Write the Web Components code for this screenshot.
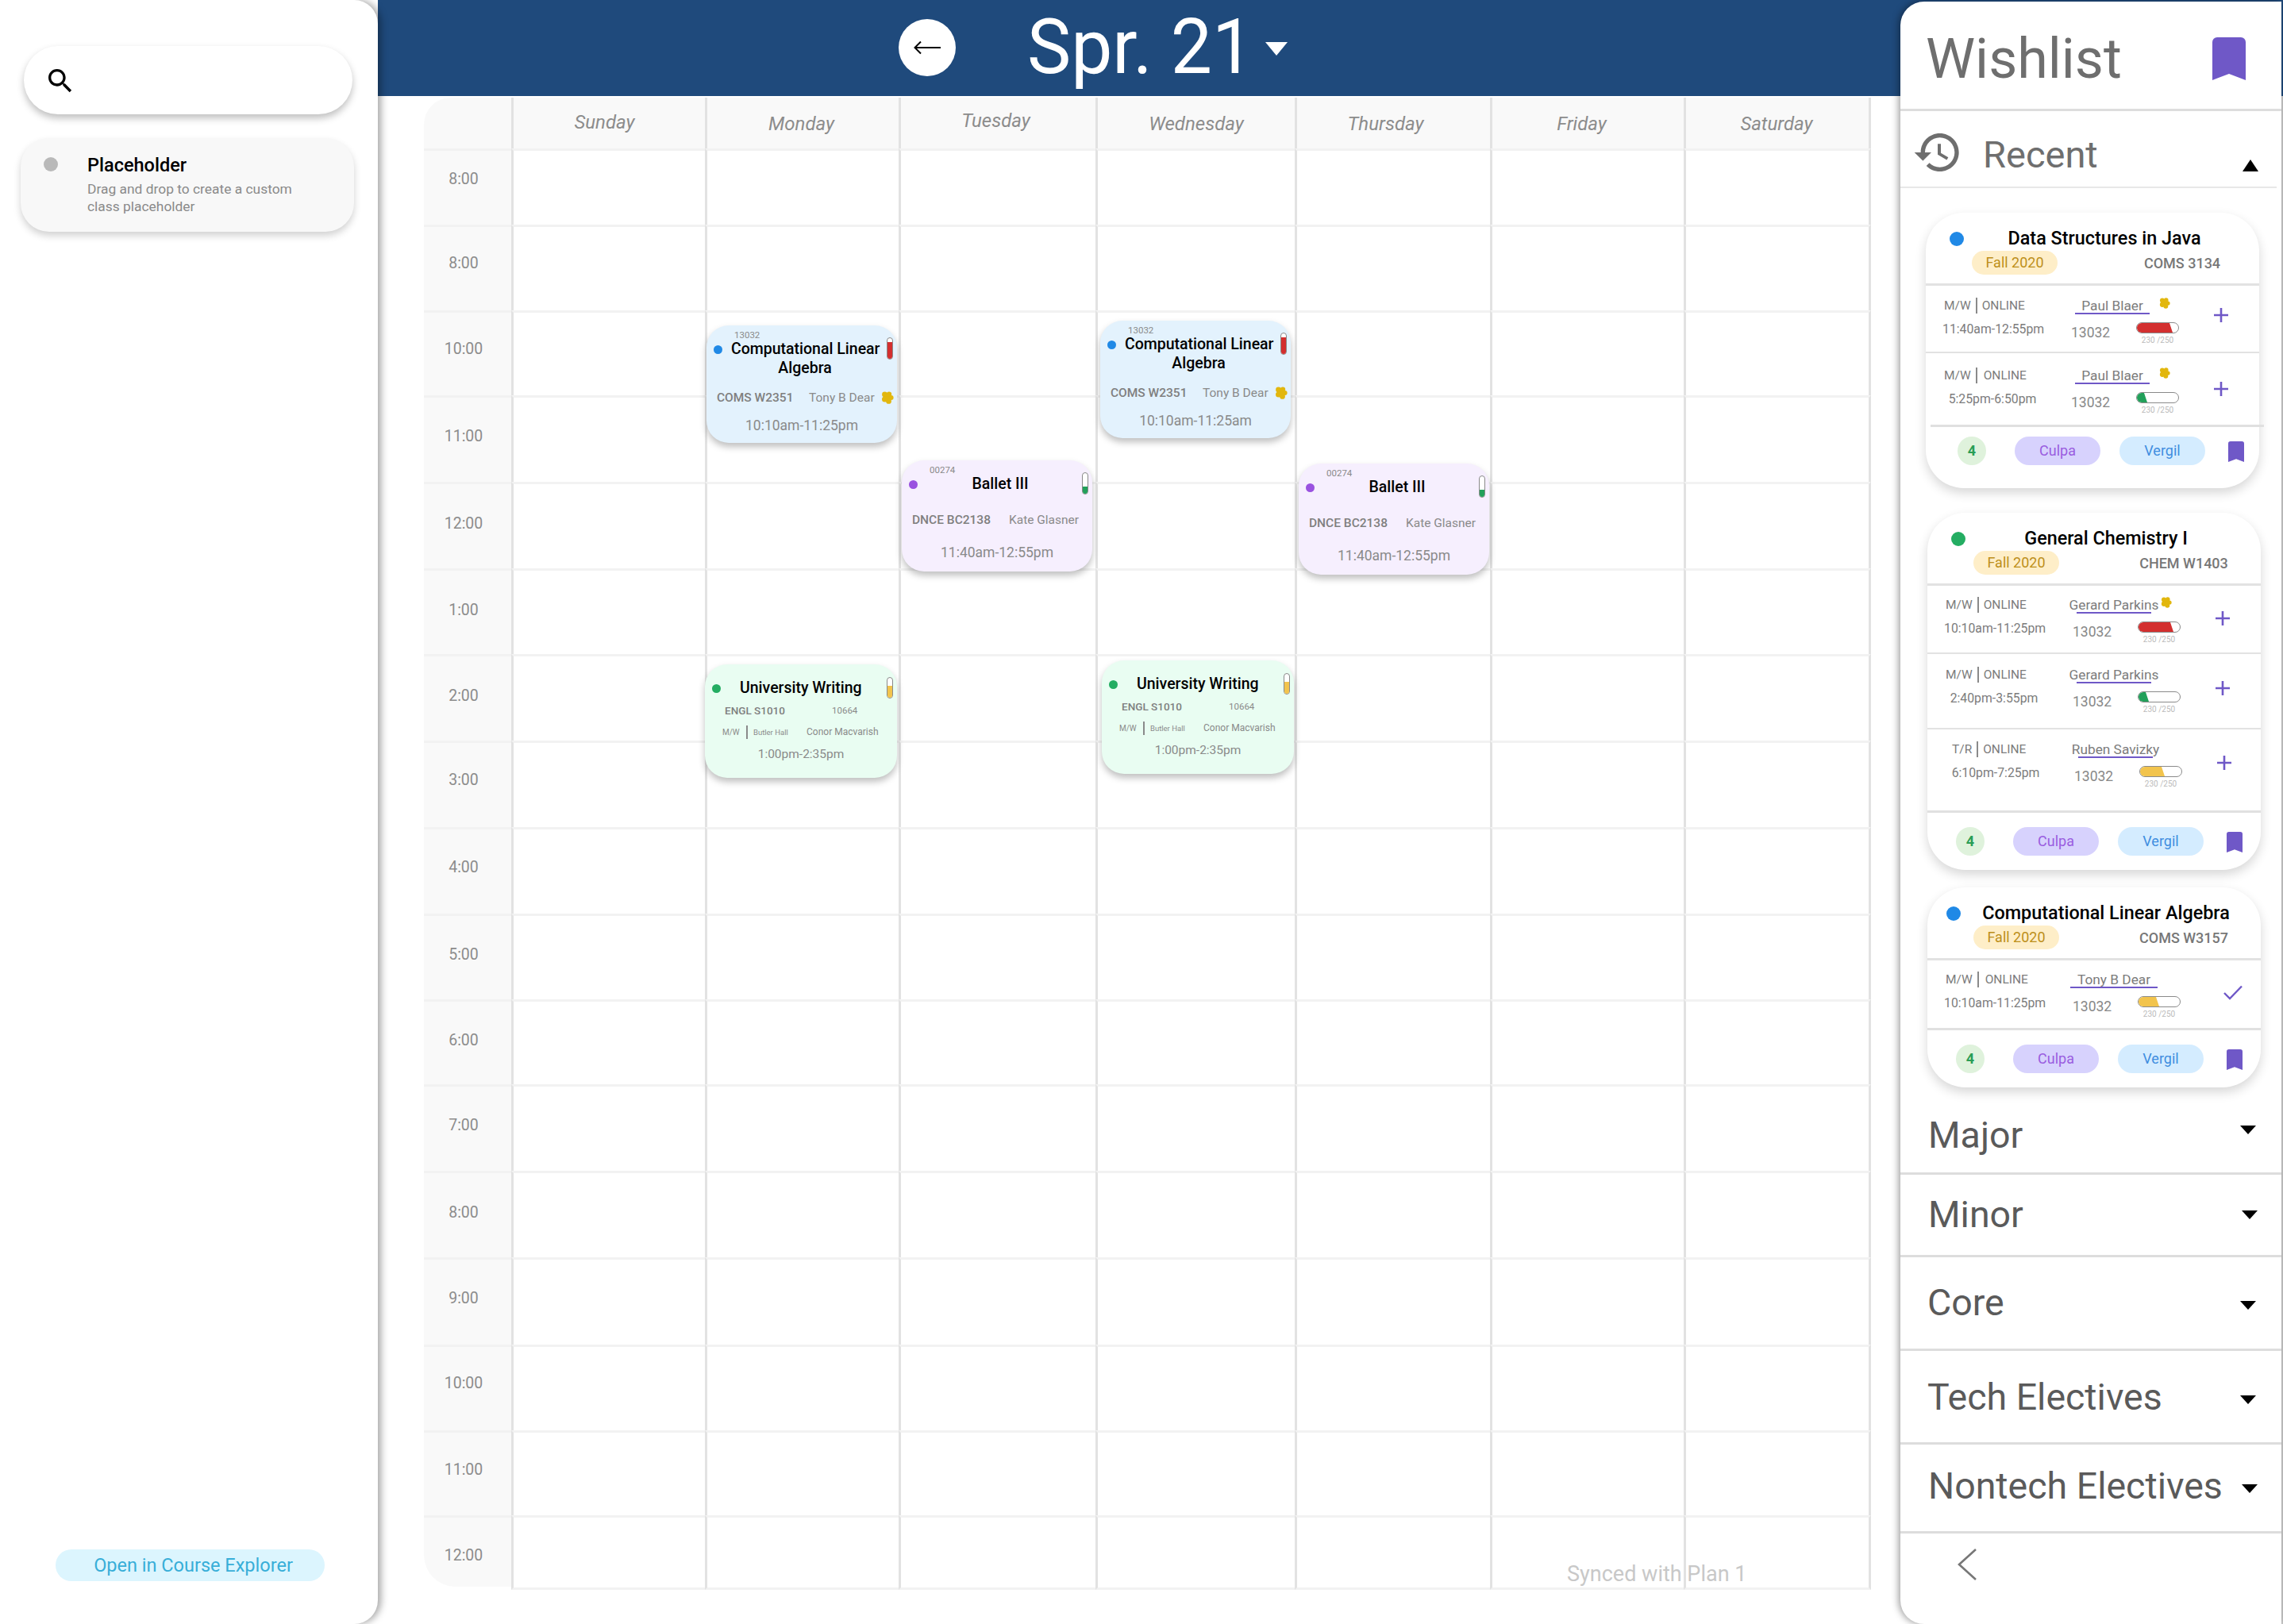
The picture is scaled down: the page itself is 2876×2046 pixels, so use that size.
<!DOCTYPE html>
<html lang="en">
<head>
<meta charset="utf-8">
<title>Schedule</title>
<style>
  html, body { margin: 0; height: 100%; background: #fff; font-family: Roboto, "Liberation Sans", sans-serif; }
</style>
</head>
<body>
<app-shell>
  <side-panel slot="side"></side-panel>
  <top-bar slot="top" label="Spr. 21"></top-bar>
  <cal-grid slot="main">
    <cal-event tone="blue" level="red" crn="13032" code="COMS W2351" prof="Tony B Dear" time="10:10am-11:25pm" culpa style="--x:356px;--y:287px">Computational Linear<br>Algebra</cal-event>
    <cal-event tone="blue" level="red" crn="13032" code="COMS W2351" prof="Tony B Dear" time="10:10am-11:25am" culpa style="--x:852px;--y:281px">Computational Linear<br>Algebra</cal-event>
    <cal-event tone="purple" level="green" crn="00274" code="DNCE BC2138" prof="Kate Glasner" time="11:40am-12:55pm" style="--x:602px;--y:457px">Ballet III</cal-event>
    <cal-event tone="purple" level="green" crn="00274" code="DNCE BC2138" prof="Kate Glasner" time="11:40am-12:55pm" style="--x:1102px;--y:461px">Ballet III</cal-event>
    <cal-event tone="mint" level="yellow" room="Butler Hall" day="M/W" crn="10664" code="ENGL S1010" prof="Conor Macvarish" time="1:00pm-2:35pm" style="--x:354px;--y:714px">University Writing</cal-event>
    <cal-event tone="mint" level="yellow" room="Butler Hall" day="M/W" crn="10664" code="ENGL S1010" prof="Conor Macvarish" time="1:00pm-2:35pm" style="--x:854px;--y:709px">University Writing</cal-event>
  </cal-grid>
  <wish-panel slot="wish">
    <wish-card label="Data Structures in Java" code="COMS 3134" tone="#2089e6" style="--mx:32px;--mt:31px;--foot-top:15px;--foot-x:4px;--foot-h:80px;--foot-shift:6px;--dot-x:30px">
      <wish-row day="M/W" where="ONLINE" time="11:40am-12:55pm" prof="Paul Blaer" level="red" fill="45" culpa style="--h:86px;--b:3px;--top:1px;--plus:-5px"></wish-row>
      <wish-row day="M/W" where="ONLINE" time="5:25pm-6:50pm" prof="Paul Blaer" level="green" fill="13" culpa style="--h:92px;--top:3px;--gap:8px"></wish-row>
    </wish-card>
    <wish-card label="General Chemistry I" code="CHEM W1403" tone="#24ad62" style="--mx:34px;--mt:31px;--dot-x:30px">
      <wish-row day="M/W" where="ONLINE" time="10:10am-11:25pm" prof="Gerard Parkins" level="red" fill="44" culpa style="--h:87px;--b:3px"></wish-row>
      <wish-row day="M/W" where="ONLINE" time="2:40pm-3:55pm" prof="Gerard Parkins" level="green" fill="13" style="--h:95px;--top:1px"></wish-row>
      <wish-row day="T/R" where="ONLINE" time="6:10pm-7:25pm" prof="Ruben Savizky" level="yellow" fill="31" style="--h:104px;--x:2px;--dp:8px"></wish-row>
    </wish-card>
    <wish-card label="Computational Linear Algebra" code="COMS W3157" tone="#2089e6" style="--mx:34px;--mt:22px;--dot-x:24px">
      <wish-row day="M/W" where="ONLINE" time="10:10am-11:25pm" prof="Tony B Dear" level="yellow" fill="26" check style="--h:88px;--b:3px;--ul-x:-8px;--ul:110px;--gap:8px"></wish-row>
    </wish-card>
    <wish-section label="Major" style="--h:110px;--pt:33px;--tri:48px;--lx:35px;--rx:32px"></wish-section>
    <wish-section label="Minor" style="--h:104px;--pt:23px;--tri:45px;--lx:35px;--rx:30px"></wish-section>
    <wish-section label="Core" style="--h:118px;--pt:30px;--tri:55px;--lx:34px;--rx:32px"></wish-section>
    <wish-section label="Tech Electives" style="--h:118px;--pt:31px;--tri:56px;--lx:34px;--rx:32px"></wish-section>
    <wish-section label="Nontech Electives" style="--h:112px;--pt:25px;--tri:50px;--lx:35px;--rx:30px"></wish-section>
  </wish-panel>
</app-shell>

<script>
const LEVELS = { red: '#d32f2f', green: '#22a05a', yellow: '#f2c44d' };
const BOOKMARK = '<path d="M0 6a6 6 0 0 1 6-6h30a6 6 0 0 1 6 6v48l-21-8-21 8z" fill="#6f58c7"/>';
const CULPA = (s) => `<svg class="culpa" width="${s}" height="${s}" viewBox="0 0 16 16" fill="#e2b70e">
  <circle cx="8" cy="8" r="4.5"/><circle cx="4.5" cy="4" r="3.4"/><circle cx="10" cy="3.6" r="3.2"/><circle cx="12.6" cy="8" r="3"/>
  <circle cx="9.5" cy="12.4" r="3.4"/><circle cx="4.6" cy="10" r="3.6"/></svg>`;

class Base extends HTMLElement {
  connectedCallback() {
    if (this.shadowRoot) return;
    this.attachShadow({ mode: 'open' }).innerHTML = this.render();
  }
  attr(name) {
    return this.getAttribute(name) ?? '';
  }
}

class AppShell extends Base {
  render() {
    return `<style>
      :host { display: grid; width: 2876px; height: 2046px; overflow: hidden;
        grid-template-columns: 476px 1fr 480px 2px; grid-template-rows: 121px 1fr; }
      .side { grid-area: 1 / 1 / 3 / 2; z-index: 2; display: grid; }
      .top { grid-area: 1 / 2 / 2 / 5; display: grid; }
      .main { grid-area: 2 / 2 / 3 / 3; padding: 2px 0 0 58px; }
      .wish { grid-area: 1 / 3 / 3 / 4; z-index: 2; display: grid; margin-top: 2px; }
      .edge { grid-area: 2 / 4 / 3 / 5; background: #ccc; }
    </style>
    <div class="side"><slot name="side"></slot></div>
    <div class="top"><slot name="top"></slot></div>
    <div class="main"><slot name="main"></slot></div>
    <div class="edge"></div>
    <div class="wish"><slot name="wish"></slot></div>`;
  }
}

class SidePanel extends Base {
  render() {
    return `<style>
      :host { display: flex; flex-direction: column; background: #fff; border-radius: 0 30px 30px 0;
        box-shadow: 4px 0 10px rgba(0,0,0,.35); }
      .search { display: flex; align-items: center; box-sizing: border-box; width: 414px; height: 86px;
        margin: 58px 0 0 30px; padding: 2px 0 0 26px; border-radius: 43px; background: #fff;
        box-shadow: 0 5px 10px rgba(0,0,0,.25); }
      .holder { display: flex; box-sizing: border-box; width: 420px; height: 118px; margin: 30px 0 0 26px;
        padding: 20px 0 0 29px; border-radius: 36px; background: #f8f8f8; box-shadow: 0 5px 10px rgba(0,0,0,.18); }
      .dot { width: 18px; height: 18px; margin-top: 4px; border-radius: 50%; background: #b9b9b9; flex: none; }
      .text { margin-left: 37px; }
      .name { font-size: 23.5px; font-weight: 500; line-height: 28px; color: #000; }
      .hint { margin-top: 5px; font-size: 17.4px; line-height: 22px; color: #8a8a8a; }
      .open { box-sizing: border-box; width: 339px; height: 40px; margin: auto 0 54px 70px; padding-left: 8px;
        border-radius: 20px; background: #dcf5fe; color: #38aed8; font-size: 23.5px; line-height: 40px; text-align: center; }
    </style>
    <div class="search">
      <svg width="40" height="40" viewBox="0 0 24 24"><path d="M15.5 14h-.79l-.28-.27C15.41 12.59 16 11.11 16 9.5 16 5.91 13.09 3 9.5 3S3 5.91 3 9.5 5.91 16 9.5 16c1.61 0 3.09-.59 4.23-1.57l.27.28v.79l5 4.99L20.49 19l-4.99-5zm-6 0C7.01 14 5 11.99 5 9.5S7.01 5 9.5 5 14 7.01 14 9.5 11.99 14 9.5 14z"/></svg>
    </div>
    <div class="holder">
      <div class="dot"></div>
      <div class="text">
        <div class="name">Placeholder</div>
        <div class="hint">Drag and drop to create a custom<br>class placeholder</div>
      </div>
    </div>
    <div class="open">Open in Course Explorer</div>`;
  }
}

class TopBar extends Base {
  render() {
    return `<style>
      :host { display: flex; align-items: flex-start; background: #1f4a7c; padding-left: 656px; }
      .back { display: grid; place-items: center; width: 72px; height: 72px; margin-top: 24px; border-radius: 50%; background: #fff; }
      .label { margin-left: 90px; width: 272px; color: #fff; font-size: 96px; line-height: 112px; margin-top: 3px;
        white-space: nowrap; transform: scaleX(.968); transform-origin: left; }
      .caret { margin: 53px 0 0 28px; }
    </style>
    <div class="back">
      <svg width="36" height="18" viewBox="0 0 36 18" fill="none" stroke="#000" stroke-width="2"><path d="M35 9H3M10 1.5 2.5 9 10 16.5"/></svg>
    </div>
    <div class="label">${this.attr('label')}</div>
    <svg class="caret" width="28" height="17" viewBox="0 0 28 17"><path d="M0 0h28L14 17z" fill="#fff"/></svg>`;
  }
}

class CalGrid extends Base {
  render() {
    const rows = [96, 108, 107, 109, 109, 108, 109, 109, 109, 108, 107, 109, 109, 110, 108, 107, 94];
    const hours = ['8:00', '8:00', '10:00', '11:00', '12:00', '1:00', '2:00', '3:00', '4:00', '5:00', '6:00', '7:00', '8:00', '9:00', '10:00', '11:00', '12:00'];
    const centers = [226, 332, 440, 550, 660, 769, 877, 983, 1093, 1203, 1311, 1418, 1528, 1636, 1743, 1852, 1960];
    const days = [['Sunday', 154, 12], ['Monday', 156, 4], ['Tuesday', 152, 6], ['Wednesday', 156, 0], ['Thursday', 156, 20], ['Friday', 156, 16], ['Saturday', 156, 2]];
    let cells = '<div class="corner"></div>';
    days.forEach(([d, c, r]) => {
      cells += `<div class="day" style="padding:${c - 123 - 14}px ${r}px 0 0">${d}</div>`;
    });
    let top = 187;
    rows.forEach((h, i) => {
      const last = i === rows.length - 1 ? ' last' : '';
      cells += `<div class="hour${last}" style="padding-top:${centers[i] - top - 15}px">${hours[i]}</div>`;
      for (let d = 0; d < 7; d++) cells += `<div class="cell${last}"></div>`;
      top += h;
    });
    return `<style>
      :host { display: grid; position: relative; width: 1820px; height: 1883px;
        grid-template-columns: 110px 244px 244px 248px 251px 246px 244px 233px;
        grid-template-rows: 64px ${rows.map((h) => h + 'px').join(' ')}; }
      div { box-sizing: border-box; }
      .corner { background: #f9f9f9; border-radius: 34px 0 0 0; }
      .day { background: #f9f9f9; border-left: 3px solid #e2e2e2; color: #8c8c8c; font-size: 24px; line-height: 28px;
        font-style: italic; text-align: center; }
      .day:nth-child(9), .cell:nth-child(8n+1) { border-right: 3px solid #e2e2e2; margin-right: -3px; }
      .hour { background: #f9f9f9; border-top: 3px solid #f2f2f2; color: #8c8c8c; font-size: 19.5px; line-height: 24px;
        padding-right: 10px; text-align: center; }
      .hour.last { border-radius: 0 0 0 40px; margin-bottom: 4px; }
      .cell { border-top: 3px solid #f2f2f2; border-left: 3px solid #e2e2e2; }
      .cell.last { border-bottom: 3px solid #f2f2f2; }
      .sync { position: absolute; left: 1440px; top: 1845px; color: #c8c8c8; font-size: 27px; line-height: 30px; white-space: nowrap; }
    </style>
    ${cells}
    <div class="sync">Synced with Plan 1</div>
    <slot></slot>`;
  }
}

class CalEvent extends Base {
  render() {
    const room = this.hasAttribute('room');
    const level = this.attr('level');
    const body = room ? `
      <div class="row one"><span class="code">${this.attr('code')}</span><span class="num">${this.attr('crn')}</span></div>
      <div class="row two"><span class="mw">${this.attr('day')}</span><i></i><span class="hall">${this.attr('room')}</span><span>${this.attr('prof')}</span></div>
      <div class="when">${this.attr('time')}</div>` : `
      <div class="row"><span class="code">${this.attr('code')}</span><span>${this.attr('prof')}</span>${this.hasAttribute('culpa') ? CULPA(16) : ''}</div>
      <div class="when">${this.attr('time')}</div>`;
    return `<style>
      :host { position: absolute; left: var(--x); top: var(--y); width: 240px; height: 148px; box-sizing: border-box;
        border-radius: 28px; background: #e3f2fd; box-shadow: 0 5px 9px rgba(0,0,0,.25); color: #8a8a8a; white-space: nowrap;
        --dot: #2089e6; --g1: 14.5px; --g2: 13px; --pl: 116px; }
      :host([tone="purple"]) { background: #f6effe; height: 140px; --dot: #9a52e0; --g1: 21.5px; --g2: 19px; --pl: 122px; }
      :host([tone="mint"]) { background: #e9fdf2; width: 242px; height: 143px; --dot: #24ad62; }
      .crn { height: 12px; padding: 6px 0 0 35px; font-size: 11.5px; line-height: 12px; }
      .head { display: flex; padding-left: 8.5px; }
      .dot { width: 11px; height: 11px; margin-top: 6.5px; border-radius: 50%; background: var(--dot); flex: none; }
      .title { width: 186px; margin-left: 11.5px; color: #000; font-size: 19.5px; font-weight: 500; line-height: 24px; text-align: center; }
      .therm { display: flex; align-items: flex-end; box-sizing: border-box; width: 8px; height: 28px; margin: -3px 0 0 10px; overflow: hidden;
        border: 1px solid #8a8a8a; border-radius: 4px; background: #fff; flex: none; }
      .therm b { display: block; width: 100%; }
      .row { display: flex; align-items: center; margin-top: var(--g1); padding-left: 13px; font-size: 15.5px; line-height: 20px; }
      .code { width: var(--pl); color: #7f7f7f; font-weight: 500; flex: none; }
      .culpa { margin-left: 8px; }
      .when { margin-top: var(--g2); font-size: 17.5px; line-height: 24px; text-align: center; }
      :host([room]) .title { width: 150px; margin-left: 24.5px; }
      :host([room]) .therm { margin: -2px 0 0 35px; height: 27px; }
      :host([room]) .row { padding-left: 25px; }
      :host([room]) .one { margin-top: 7px; font-size: 13.5px; line-height: 16px; }
      :host([room]) .one .code { width: 135px; }
      .num { font-size: 11.5px; }
      :host([room]) .two { margin-top: 11px; padding-left: 22px; font-size: 12px; line-height: 17px; }
      .mw { width: 30px; font-size: 10px; }
      .two i { width: 2px; height: 17px; margin-right: 7px; background: #8a8a8a; }
      .hall { width: 67px; font-size: 9.5px; }
      :host([room]) .when { margin-top: 8.5px; font-size: 15.5px; line-height: 20px; }
    </style>
    <div class="crn">${room ? '' : this.attr('crn')}</div>
    <div class="head">
      <div class="dot"></div>
      <div class="title"><slot></slot></div>
      <div class="therm"><b style="height:${{ red: 21, green: 9, yellow: 15 }[level]}px;background:${LEVELS[level]}"></b></div>
    </div>
    ${body}`;
  }
}

class WishPanel extends Base {
  render() {
    return `<style>
      :host { display: block; background: #fff; border-radius: 30px 0 0 30px; box-shadow: -2px 0 10px rgba(0,0,0,.4); color: #6e6e6e; }
      .title { display: flex; align-items: flex-start; box-sizing: border-box; height: 138px; padding: 32px 45px 0 32px; border-bottom: 3px solid #ddd; }
      h1 { margin: 0; font-size: 70px; font-weight: 400; line-height: 80px; }
      .title svg { margin: 13px 0 0 auto; }
      .recent { display: flex; align-items: flex-start; box-sizing: border-box; height: 97px; margin-right: 6px; border-bottom: 2px solid #e8e8e8; }
      .recent .hist { margin: 20px 0 0 15px; }
      .recent h2 { margin: 28px 0 0 25px; font-size: 47px; font-weight: 400; line-height: 54px; }
      .recent .up { margin: 61px 23px 0 auto; }
      .back { display: block; margin: 19px 0 0 72px; }
    </style>
    <div class="title">
      <h1>Wishlist</h1>
      <svg width="42" height="54" viewBox="0 0 42 54">${BOOKMARK}</svg>
    </div>
    <div class="recent">
      <svg class="hist" width="64" height="64" viewBox="0 0 24 24" fill="#6e6e6e"><path d="M13 3c-4.97 0-9 4.03-9 9H1l3.89 3.89.07.14L9 12H6c0-3.87 3.13-7 7-7s7 3.13 7 7-3.13 7-7 7c-1.93 0-3.68-.79-4.94-2.06l-1.42 1.42C8.27 19.99 10.51 21 13 21c4.97 0 9-4.03 9-9s-4.03-9-9-9zm-1 5v5l4.28 2.54.72-1.21-3.5-2.08V8H12z"/></svg>
      <h2>Recent</h2>
      <svg class="up" width="20" height="15" viewBox="0 0 20 15"><path d="M10 0l10 15H0z"/></svg>
    </div>
    <slot></slot>
    <svg class="back" width="24" height="40" viewBox="0 0 24 40" fill="none" stroke="#777" stroke-width="2.6"><path d="M23 1 2 20l21 19"/></svg>`;
  }
}

class WishCard extends Base {
  render() {
    return `<style>
      :host { display: block; width: 420px; margin: var(--mt) 0 0 var(--mx); border-radius: 48px; background: #fff;
        box-shadow: 0 6px 14px rgba(0,0,0,.16); color: #777; }
      .head { box-sizing: border-box; height: 89px; padding-top: 17.5px; }
      .line1 { display: grid; height: 28px; }
      .dot { grid-area: 1 / 1; align-self: center; justify-self: start; width: 18px; height: 18px; margin: 3px 0 0 var(--dot-x);
        border-radius: 50%; background: ${this.attr('tone')}; }
      .name { grid-area: 1 / 1; justify-self: center; padding-left: 30px; color: #000; font-size: 23.4px; font-weight: 500; line-height: 28px; white-space: nowrap; }
      .line2 { display: flex; align-items: center; height: 30px; margin-top: 2.5px; padding-left: 58px; }
      .term { width: 108px; border-radius: 15px; background: #feeec8; color: #bd8f1a; font-size: 18px; line-height: 30px; text-align: center; }
      .code { display: flex; justify-content: center; width: 100px; margin-left: 107px; font-size: 18px; font-weight: 500; white-space: nowrap; }
      .foot { position: relative; display: flex; align-items: flex-start; box-sizing: border-box; height: var(--foot-h, 75px);
        padding: var(--foot-top, 21px) 0 0 calc(36px + var(--foot-x, 0px)); }
      .foot::before { content: ""; position: absolute; top: 0; left: var(--foot-shift, 0); width: 100%; height: 3px; background: #e0e0e0; }
      .foot > div { height: 36px; font-size: 18px; line-height: 36px; text-align: center; border-radius: 18px; }
      .num { width: 36px; background: #dff2dc; color: #2a9d56; font-weight: 700; }
      .culpa { width: 108px; margin-left: 36px; background: #d7d2fd; color: #9a5de0; }
      .vergil { width: 108px; margin-left: 24px; background: #d4ecff; color: #3f8ee0; }
      .foot svg { margin: 6px 0 0 29px; }
    </style>
    <div class="head">
      <div class="line1"><div class="dot"></div><div class="name">${this.attr('label')}</div></div>
      <div class="line2"><div class="term">Fall 2020</div><div class="code">${this.attr('code')}</div></div>
    </div>
    <slot></slot>
    <div class="foot">
      <div class="num">4</div><div class="culpa">Culpa</div><div class="vergil">Vergil</div>
      <svg width="20" height="26" viewBox="0 0 42 54" preserveAspectRatio="none">${BOOKMARK}</svg>
    </div>`;
  }
}

class WishRow extends Base {
  render() {
    const action = this.hasAttribute('check')
      ? '<svg class="check" width="24" height="19" viewBox="0 0 24 19" fill="none" stroke="#6f58c7" stroke-width="2.4"><path d="M1 10l7 7L23 1.5"/></svg>'
      : '<svg class="plus" width="18" height="18" viewBox="0 0 18 18" fill="none" stroke="#6f58c7" stroke-width="2.6"><path d="M0 9h18M9 0v18"/></svg>';
    return `<style>
      :host { display: flex; align-items: flex-start; box-sizing: border-box; height: var(--h);
        border-top: var(--b, 2px) solid #e2e2e2; color: #7c7c7c; white-space: nowrap;
        padding: calc(17px - var(--b, 2px) + var(--top, 0px)) 0 0 calc(21px + var(--x, 0px)); }
      .left { width: 126px; flex: none; }
      .where { display: flex; align-items: center; height: 20px; padding-left: var(--dp, 2px); font-size: 15.5px; line-height: 20px; }
      .where i { width: 2px; height: 20px; margin: 0 var(--gap, 6px) 0 6px; background: #8a8a8a; }
      .time { margin-top: 10px; font-size: 15.8px; line-height: 20px; text-align: center; }
      .mid { width: 180px; margin-left: 36px; flex: none; }
      .who { display: flex; align-items: flex-start; }
      .prof { display: flex; justify-content: center; box-sizing: content-box; width: var(--ul, 94px); height: 19px; margin-left: calc(5px + var(--ul-x, 0px));
        border-bottom: 2px solid #6f58c7; font-size: 17.3px; line-height: 20px; flex: none; }
      .culpa { margin: 0 0 0 calc(12px - var(--ul-x, 0px)); }
      .stats { display: grid; grid-template-columns: 82px 54px; margin-top: 10px; }
      .crn { margin-top: 3px; font-size: 17.5px; line-height: 20px; color: #888; }
      .bar { display: block; box-sizing: border-box; height: 14px; border: 1.2px solid #8a8a8a; border-radius: 7px; overflow: hidden; background: #fff; }
      .bar b { display: block; height: 100%; clip-path: polygon(0 0, calc(100% - 4px) 0, 100% 100%, 0 100%); }
      .cap { margin-top: 3px; color: #bbb; font-size: 10px; line-height: 12px; text-align: center; }
      .plus { margin-top: calc(18px + var(--plus, 0px)); flex: none; }
      .check { margin: 17px 0 0 10px; flex: none; }
    </style>
    <div class="left">
      <div class="where"><span>${this.attr('day')}</span><i></i><span>${this.attr('where')}</span></div>
      <div class="time">${this.attr('time')}</div>
    </div>
    <div class="mid">
      <div class="who"><div class="prof">${this.attr('prof')}</div>${this.hasAttribute('culpa') ? CULPA(14) : ''}</div>
      <div class="stats">
        <div class="crn">13032</div>
        <div>
          <div class="bar"><b style="width:${this.attr('fill')}px;background:${LEVELS[this.attr('level')]}"></b></div>
          <div class="cap">230 /250</div>
        </div>
      </div>
    </div>
    ${action}`;
  }
}

class WishSection extends Base {
  render() {
    return `<style>
      :host { display: flex; align-items: flex-start; box-sizing: border-box; height: var(--h); border-bottom: 3px solid #ddd;
        padding: var(--pt) var(--rx) 0 var(--lx); color: #5a5a5a; }
      .label { font-size: 46.5px; line-height: 54px; white-space: nowrap; }
      svg { margin: calc(var(--tri) - var(--pt)) 0 0 auto; flex: none; }
    </style>
    <div class="label">${this.attr('label')}</div>
    <svg width="20" height="11" viewBox="0 0 20 11"><path d="M0 0h20L10 11z"/></svg>`;
  }
}

customElements.define('app-shell', AppShell);
customElements.define('side-panel', SidePanel);
customElements.define('top-bar', TopBar);
customElements.define('cal-grid', CalGrid);
customElements.define('cal-event', CalEvent);
customElements.define('wish-panel', WishPanel);
customElements.define('wish-card', WishCard);
customElements.define('wish-row', WishRow);
customElements.define('wish-section', WishSection);
</script>
</body>
</html>
